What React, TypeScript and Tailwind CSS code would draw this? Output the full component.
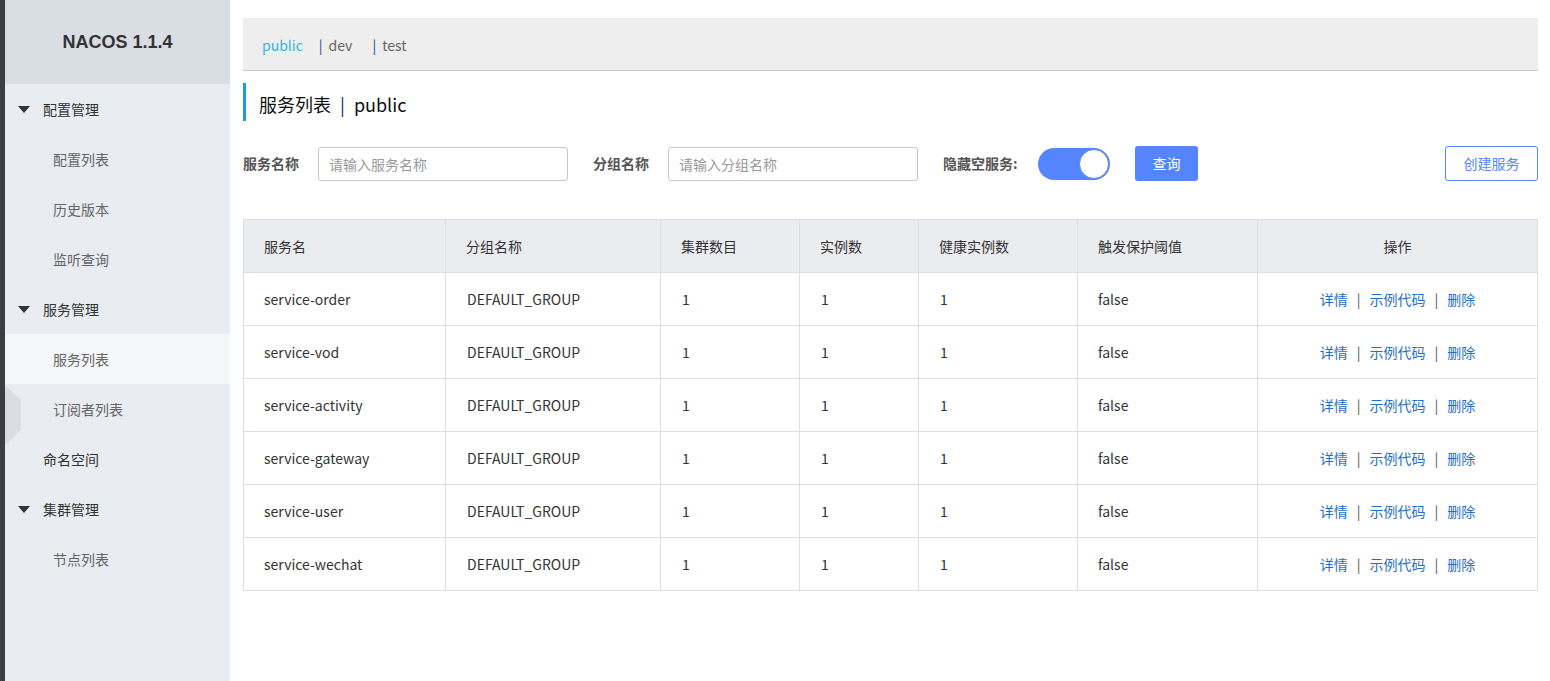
import { useState } from "react";

const FONT = { fontFamily: '"Noto Sans CJK SC", "Liberation Sans", sans-serif' };

type MenuItem = { label: string; level: 0 | 1; group?: boolean; active?: boolean };

const MENU: MenuItem[] = [
  { label: "配置管理", level: 0, group: true },
  { label: "配置列表", level: 1 },
  { label: "历史版本", level: 1 },
  { label: "监听查询", level: 1 },
  { label: "服务管理", level: 0, group: true },
  { label: "服务列表", level: 1, active: true },
  { label: "订阅者列表", level: 1 },
  { label: "命名空间", level: 0 },
  { label: "集群管理", level: 0, group: true },
  { label: "节点列表", level: 1 },
];

const SERVICES = [
  "service-order",
  "service-vod",
  "service-activity",
  "service-gateway",
  "service-user",
  "service-wechat",
];

const COLS = [
  { title: "服务名", w: "w-[202px]" },
  { title: "分组名称", w: "w-[215px]" },
  { title: "集群数目", w: "w-[139px]" },
  { title: "实例数", w: "w-[119px]" },
  { title: "健康实例数", w: "w-[159px]" },
  { title: "触发保护阈值", w: "w-[180px]" },
];

function Sidebar() {
  return (
    <div className="relative w-[225px] shrink-0 bg-[#e9ecf1]">
      <div className="h-[84px] bg-[#d9dde4] flex items-center justify-center">
        <span className="text-[18px] font-bold text-[#333]" style={{ fontFamily: '"Liberation Sans", sans-serif' }}>
          NACOS 1.1.4
        </span>
      </div>
      {MENU.map((m) => (
        <div
          key={m.label}
          className={`h-[50px] flex items-center text-[14px] ${m.active ? "bg-[#f4f6f8]" : ""} ${
            m.level === 0 ? "pl-[38px] text-[#333]" : "pl-[48px] text-[#666]"
          }`}
        >
          {m.group && (
            <span className="mr-[13px] -ml-[25px] w-0 h-0 border-l-[6px] border-r-[6px] border-t-[7px] border-l-transparent border-r-transparent border-t-[#333]" />
          )}
          {m.label}
        </div>
      ))}
      <div
        className="absolute left-0 top-[385px] w-[16px] h-[60px] bg-[#dadde3]"
        style={{ clipPath: "polygon(0 0, 100% 25%, 100% 75%, 0 100%)" }}
      />
    </div>
  );
}

function Toggle() {
  const [on, setOn] = useState(true);
  return (
    <button
      onClick={() => setOn(!on)}
      className={`w-[72px] h-[32px] rounded-full flex items-center px-[1px] ${on ? "bg-[#5584ff] justify-end" : "bg-[#ccc] justify-start"}`}
    >
      <span className="w-[30px] h-[30px] rounded-full bg-white border border-[#5584ff]" />
    </button>
  );
}

export default function App() {
  const [ns, setNs] = useState("public");
  return (
    <div className="flex w-[1550px] h-[681px] bg-white overflow-hidden" style={FONT}>
      <div className="w-[5px] shrink-0 bg-[#3c3f41]" />
      <Sidebar />
      <div className="flex-1 pl-[13px] pr-[12px] pt-[18px]">
        {/* namespace bar */}
        <div className="h-[53px] bg-[#eeeeee] border-b border-[#c8c8c8] flex items-center pl-[19px] pt-[2px] text-[14px]">
          {["public", "dev", "test"].map((n, i) => (
            <span key={n} className="flex items-center mr-[16px]">
              {i > 0 && <span className="text-[#2b4a7a] mr-[6px]">|</span>}
              <span
                onClick={() => setNs(n)}
                className={`cursor-pointer ${ns === n ? "text-[#33b5e5]" : "text-[#666]"} ${i === 1 ? "mr-[4px]" : ""}`}
              >
                {n}
              </span>
            </span>
          ))}
        </div>

        {/* title */}
        <div className="mt-[12px] h-[38px] border-l-[3px] border-[#1a9fd9] pl-[13px] pt-[5px] flex items-center text-[18px] text-[#111]">
          服务列表<span className="mx-[9px] text-[#0b2a7a]">|</span>{ns}
        </div>

        {/* filter */}
        <div className="mt-[25px] h-[35px] flex items-center text-[14px]">
          <span className="font-bold text-[#555] w-[75px]">服务名称</span>
          <input
            placeholder="请输入服务名称"
            className="w-[250px] h-[34px] border border-[#c4c6cf] rounded-[3px] px-[10px] text-[14px] placeholder:text-[#999] outline-none"
          />
          <span className="font-bold text-[#555] ml-[25px] w-[75px]">分组名称</span>
          <input
            placeholder="请输入分组名称"
            className="w-[250px] h-[34px] border border-[#c4c6cf] rounded-[3px] px-[10px] text-[14px] placeholder:text-[#999] outline-none"
          />
          <span className="font-bold text-[#555] ml-[25px] w-[95px]">隐藏空服务:</span>
          <Toggle />
          <button className="ml-[25px] w-[63px] h-[35px] bg-[#5584ff] rounded-[3px] text-white text-[14px]">查询</button>
          <button className="ml-auto w-[93px] h-[35px] border border-[#5584ff] rounded-[3px] text-[#5584ff] text-[14px]">
            创建服务
          </button>
        </div>

        {/* table */}
        <table className="mt-[38px] w-full border-collapse border border-[#dcdee3] text-[14px] text-[#333]">
          <thead>
            <tr className="h-[53px] bg-[#ebecf0]">
              {COLS.map((c) => (
                <th key={c.title} className={`${c.w} border border-[#dcdee3] text-left font-normal pl-[20px]`}>
                  {c.title}
                </th>
              ))}
              <th className="border border-[#dcdee3] text-center font-normal">操作</th>
            </tr>
          </thead>
          <tbody>
            {SERVICES.map((s) => (
              <tr key={s} className="h-[53px]">
                <td className="border border-[#dcdee3] pl-[20px]">{s}</td>
                <td className="border border-[#dcdee3] pl-[21px]">DEFAULT_GROUP</td>
                <td className="border border-[#dcdee3] pl-[21px]">1</td>
                <td className="border border-[#dcdee3] pl-[21px]">1</td>
                <td className="border border-[#dcdee3] pl-[21px]">1</td>
                <td className="border border-[#dcdee3] pl-[20px]">false</td>
                <td className="border border-[#dcdee3] text-center">
                  <a className="text-[#1f6fcb] cursor-pointer">详情</a>
                  <span className="mx-[9px] text-[#555]">|</span>
                  <a className="text-[#1f6fcb] cursor-pointer">示例代码</a>
                  <span className="mx-[9px] text-[#555]">|</span>
                  <a className="text-[#1f6fcb] cursor-pointer">删除</a>
                </td>
              </tr>
            ))}
          </tbody>
        </table>
      </div>
    </div>
  );
}
